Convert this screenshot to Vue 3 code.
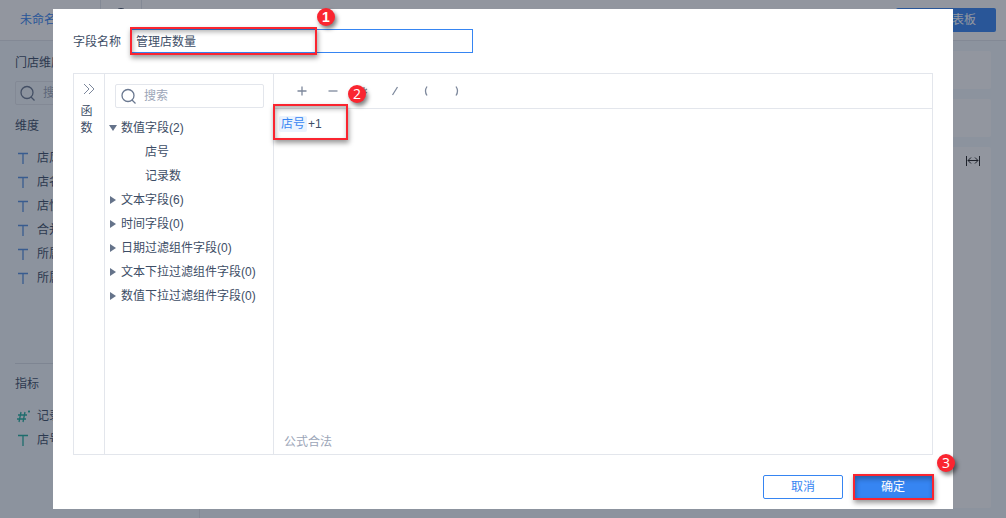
<script setup>
import { ref } from 'vue'

const fieldName = ref('管理店数量')
const search = ref('')
const dimensions = ['店风格', '店名', '店性质', '合并', '所属小区', '所属大区']
const groups = [
  { name: '数值字段(2)', open: true, items: ['店号', '记录数'] },
  { name: '文本字段(6)' },
  { name: '时间字段(0)' },
  { name: '日期过滤组件字段(0)' },
  { name: '文本下拉过滤组件字段(0)' },
  { name: '数值下拉过滤组件字段(0)' },
]
const operators = [
  { name: '加', d: 'M1.5 6H10.5M6 1.5V10.5' },
  { name: '减', d: 'M1.5 6H10.5' },
  { name: '乘', d: 'M6 2V10M3 4L9 8M9 4L3 8' },
  { name: '除', d: 'M8.5 2L3.5 10' },
  { name: '左括号', d: 'M7 1.5Q4 6 7 10.5' },
  { name: '右括号', d: 'M5 1.5Q8 6 5 10.5' },
]
</script>

<template>
  <div class="page">
    <header class="topbar">
      <a href="#" class="doc">未命名</a>
      <span class="tab"><i class="dot"></i></span>
      <button class="publish" type="button">生成仪表板</button>
    </header>
    <div class="workspace">
      <aside class="sidebar">
        <h2>门店维度</h2>
        <div class="search side-search">
          <svg viewBox="0 0 16 16"><circle cx="7" cy="7.5" r="6" /><path d="M11 12L14.5 15.5" /></svg>
          <span>搜索</span>
        </div>
        <h2 class="dim-title">维度</h2>
        <ul class="fields">
          <li v-for="d in dimensions" :key="d">
            <svg viewBox="0 0 14 14"><path d="M2 2.5H12M7 2.5V13" /></svg>{{ d }}
          </li>
        </ul>
        <div class="measures">
          <h2>指标</h2>
          <ul class="fields green">
            <li>
              <svg viewBox="0 0 14 14"><path d="M5 3L3 13M9 3L7 13M2 6H11M1 10H10M12 2.5H14M13 1.5V3.5" /></svg>记录数
            </li>
            <li>
              <svg viewBox="0 0 14 14"><path d="M2 2.5H12M7 2.5V13" /></svg>店号
            </li>
          </ul>
        </div>
      </aside>
      <main class="canvas">
        <section class="shelf"></section>
        <section class="shelf"></section>
        <section class="chart">
          <svg class="fit" viewBox="0 0 16 12"><path d="M1.5 1V11M14.5 1V11M3 5.5H13M6 2.5L3 5.5L6 8.5M10 2.5L13 5.5L10 8.5" /></svg>
        </section>
      </main>
    </div>

    <div class="overlay">
      <div class="modal" role="dialog" aria-label="计算字段">
        <div class="name-row">
          <label for="field-name">字段名称</label>
          <div class="name-box">
            <input id="field-name" v-model="fieldName" type="text" />
            <div class="mark mark-name"><b>1</b></div>
          </div>
        </div>

        <div class="editor">
          <button class="functions" type="button">
            <svg viewBox="0 0 12 12"><path d="M1 1L6 6L1 11M6 1L11 6L6 11" /></svg>
            <span>函</span><span>数</span>
          </button>
          <div class="tree">
            <label class="search">
              <svg viewBox="0 0 16 16"><circle cx="7" cy="7.5" r="6" /><path d="M11 12L14.5 15.5" /></svg>
              <input v-model="search" type="text" placeholder="搜索" aria-label="搜索" />
            </label>
            <ul>
              <li v-for="g in groups" :key="g.name">
                <div class="group"><i :class="{ open: g.open }"></i>{{ g.name }}</div>
                <ul v-if="g.open">
                  <li v-for="item in g.items" :key="item" class="leaf">{{ item }}</li>
                </ul>
              </li>
            </ul>
          </div>
          <div class="formula">
            <div class="operators">
              <button v-for="o in operators" :key="o.name" type="button" :aria-label="o.name">
                <svg viewBox="0 0 12 12"><path :d="o.d" /></svg>
              </button>
            </div>
            <div class="expression">
              <span class="token">店号</span><span class="plain">+1</span>
              <div class="mark mark-formula"><b>2</b></div>
            </div>
            <div class="status">公式合法</div>
          </div>
        </div>

        <div class="actions">
          <button type="button">取消</button>
          <div class="confirm">
            <button type="button" class="primary">确定</button>
            <div class="mark mark-confirm"><b>3</b></div>
          </div>
        </div>
      </div>
    </div>
  </div>
</template>

<style>
body {
  margin: 0;
}
</style>

<style scoped>
* {
  box-sizing: border-box;
}
.page {
  position: relative;
  display: flex;
  flex-direction: column;
  min-height: 100vh;
  overflow: hidden;
  background: #f3fafd;
  color: #3d4d66;
  font: 12px/24px "Liberation Sans", "Noto Sans CJK SC", sans-serif;
}
button,
input {
  font: inherit;
  color: inherit;
  margin: 0;
  padding: 0;
  border: 0;
  background: none;
}
ul {
  list-style: none;
  margin: 0;
  padding: 0;
}
h2 {
  margin: 0;
  font-size: 12px;
  font-weight: 400;
}
svg {
  display: block;
  flex: none;
  fill: none;
  stroke: currentColor;
  stroke-width: 1.3;
}
.topbar {
  display: flex;
  align-items: center;
  height: 41px;
  padding: 0 10px 0 20px;
  background: #fff;
  border-bottom: 1px solid #e3e6ec;
}
.doc {
  width: 80px;
  color: #3685f2;
  text-decoration: none;
}
.tab {
  width: 42px;
  height: 40px;
  padding: 8px 13px;
  border: solid #e3e6ec;
  border-width: 0 1px;
}
.dot {
  display: block;
  height: 14px;
  border: 1px solid #3d4d66;
  border-radius: 50%;
}
.publish {
  width: 100px;
  height: 24px;
  margin-left: auto;
  border-radius: 2px;
  background: #3685f2;
  color: #fff;
}
.workspace {
  flex: 1;
  display: flex;
}
.sidebar {
  display: flex;
  flex-direction: column;
  width: 200px;
  padding: 10px 15px;
  border-right: 1px solid #e3e6ec;
}
.search {
  display: flex;
  align-items: center;
  gap: 7px;
  height: 24px;
  padding: 0 5px;
  border: 1px solid #e3e6ec;
  border-radius: 2px;
}
.search svg {
  width: 16px;
  height: 16px;
  color: #6a7890;
}
.side-search {
  margin-top: 6px;
  padding: 0 4px;
  color: #9ca6b8;
}
.dim-title {
  margin: 9px 0 8px;
}
.fields li {
  display: flex;
  align-items: center;
  gap: 7px;
  height: 24px;
}
.fields svg {
  width: 14px;
  height: 14px;
  margin-left: 1px;
  color: #5590e0;
}
.measures {
  margin-top: 73px;
  border-top: 1px solid #d8dee6;
  padding-top: 8px;
}
.measures .fields {
  margin-top: 8px;
}
.fields.green svg {
  color: #22b0a0;
}
.canvas {
  flex: 1;
  display: flex;
  flex-direction: column;
  gap: 10px;
  padding: 10px 15px 10px 10px;
}
.shelf,
.chart {
  background: #fff;
  border-radius: 2px;
}
.shelf {
  height: 38px;
}
.chart {
  flex: 1;
  padding: 8px 10px;
}
.fit {
  width: 16px;
  height: 12px;
  margin-left: auto;
  color: #222;
  stroke-width: 1;
}
.overlay {
  position: absolute;
  inset: 0;
  display: flex;
  align-items: center;
  justify-content: center;
  background: rgba(28, 36, 55, 0.48);
}
.modal {
  display: flex;
  flex-direction: column;
  width: calc(100% - 106px);
  height: calc(100% - 18px);
  min-height: 500px;
  padding: 20px 20px 10px;
  background: #fff;
}
.name-row {
  display: flex;
  align-items: center;
  gap: 9px;
}
.name-row label {
  padding-top: 2px;
  line-height: 22px;
}
.name-box {
  position: relative;
  width: 343px;
}
.name-box input {
  display: block;
  width: 100%;
  height: 24px;
  padding: 1px 5px 0;
  border: 1px solid #3685f2;
  outline: 0;
}
.editor {
  flex: 1;
  display: flex;
  margin-top: 20px;
  border: 1px solid #e3e6ec;
}
.functions {
  display: flex;
  flex-direction: column;
  align-items: center;
  width: 31px;
  padding: 9px 5px 0 0;
  border-right: 1px solid #e3e6ec;
  line-height: 17px;
}
.functions svg {
  width: 12px;
  height: 12px;
  margin: 0 0 8px 4px;
  color: #7d889c;
  stroke-width: 1;
}
.tree {
  width: 169px;
  padding: 10px 9px 0 10px;
  border-right: 1px solid #e3e6ec;
}
.tree > ul {
  margin: 8px -9px 0 -6px;
}
.search input {
  width: 100%;
  min-width: 0;
  outline: 0;
}
.search input::placeholder {
  color: #9ca6b8;
  opacity: 1;
}
.group {
  display: flex;
  align-items: center;
  gap: 4px;
  white-space: nowrap;
}
.group i {
  width: 8px;
  height: 8px;
  background: #65738a;
  clip-path: polygon(1px 0, 7px 4px, 1px 8px);
}
.group i.open {
  clip-path: polygon(0 1px, 8px 1px, 4px 7px);
}
.leaf {
  padding-left: 36px;
}
.formula {
  flex: 1;
  display: flex;
  flex-direction: column;
}
.operators {
  display: flex;
  align-items: center;
  gap: 7px;
  height: 35px;
  padding-left: 16px;
  border-bottom: 1px solid #e3e6ec;
}
.operators button {
  display: grid;
  place-items: center;
  width: 24px;
  height: 24px;
  color: #7d889c;
}
.operators svg {
  width: 12px;
  height: 12px;
}
.expression {
  position: relative;
  flex: 1;
  padding: 7px 5px;
  line-height: 16px;
}
.token {
  display: inline-block;
  padding: 0 2px;
  margin-right: 1px;
  border-radius: 2px;
  background: #eaf3fe;
  color: #3685f2;
}
.status {
  padding: 0 10px;
  color: #9ca6b8;
}
.actions {
  display: flex;
  justify-content: flex-end;
  gap: 10px;
  margin-top: 20px;
}
.actions button {
  display: block;
  width: 80px;
  height: 24px;
  border: 1px solid #3685f2;
  border-radius: 2px;
  color: #3685f2;
  line-height: 22px;
}
.actions .primary {
  background: #3685f2;
  color: #fff;
}
.confirm {
  position: relative;
}
.mark {
  position: absolute;
  border: 2px solid #fa2530;
  box-shadow: 1px 3px 5px rgba(0, 0, 0, 0.4), inset 1px 3px 5px rgba(0, 0, 0, 0.3);
  pointer-events: none;
}
.mark b {
  position: absolute;
  width: 18px;
  height: 18px;
  border-radius: 50%;
  background: #fa2530;
  box-shadow: 2px 3px 4px rgba(0, 0, 0, 0.5);
  color: #fff;
  font: 14px/18px "Open Sans", sans-serif;
  text-align: center;
}
.mark-name {
  left: 0;
  top: -2px;
  width: 187px;
  height: 28px;
}
.mark-name b {
  right: -20px;
  top: -21px;
  font: bold 14px/18px "Liberation Sans", sans-serif;
}
.mark-formula {
  left: -1px;
  top: -5px;
  width: 75px;
  height: 36px;
}
.mark-formula b {
  right: -20px;
  top: -21px;
}
.mark-confirm {
  inset: -1px -1px -1px 0;
}
.mark-confirm b {
  right: -23px;
  top: -22px;
}
</style>
